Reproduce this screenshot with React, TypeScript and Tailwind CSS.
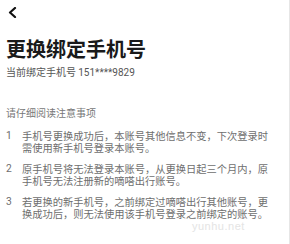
import React from "react";

const items = [
  "手机号更换成功后，本账号其他信息不变，下次登录时需使用新手机号登录本账号。",
  "原手机号将无法登录本账号，从更换日起三个月内，原手机号无法注册新的嘀嗒出行账号。",
  "若更换的新手机号，之前绑定过嘀嗒出行其他账号，更换成功后，则无法使用该手机号登录之前绑定的账号。",
];

export default function App() {
  return (
    <div
      className="relative w-[290px] h-[244px] overflow-hidden bg-white border-r border-[#e6e6e6]"
      style={{ fontFamily: '"Noto Sans CJK SC", "Noto Sans", sans-serif' }}
    >
      <div className="pt-[7px] pl-[8px]">
        <svg width="9" height="11" viewBox="0 0 9 11" fill="none">
          <path d="M7 1 L2 5.5 L7 10" stroke="#111" strokeWidth="2.2" strokeLinecap="round" strokeLinejoin="round" />
        </svg>
      </div>
      <div className="mt-[19px] pl-[6px] text-[20px] leading-[24px] font-bold text-[#1a1a1a]">
        更换绑定手机号
      </div>
      <div className="mt-[4px] pl-[6px] text-[10px] leading-[14px] text-[#555]">
        当前绑定手机号 <span style={{ fontFamily: 'Roboto, "Noto Sans", sans-serif' }}>151****9829</span>
      </div>
      <div className="mt-[26px] pl-[6px] text-[10px] leading-[14px] text-[#777]">
        请仔细阅读注意事项
      </div>
      <div className="mt-[10px] flex flex-col gap-[10px]">
        {items.map((t, i) => (
          <div key={i} className="flex text-[10.25px] leading-[11.5px] text-[#6e6e6e]">
            <div
              className="w-[22px] pl-[6px] shrink-0"
              style={{ fontFamily: 'Roboto, "Noto Sans", sans-serif' }}
            >
              {i + 1}
            </div>
            <div className="w-[250px]">{t}</div>
          </div>
        ))}
      </div>
      <div
        className="absolute left-[192px] top-[220px] text-[11px] leading-[12px] text-[#e4e4e4] tracking-[0.5px]"
        style={{ fontFamily: '"Liberation Sans", sans-serif' }}
      >
        yunhu.net
      </div>
    </div>
  );
}
